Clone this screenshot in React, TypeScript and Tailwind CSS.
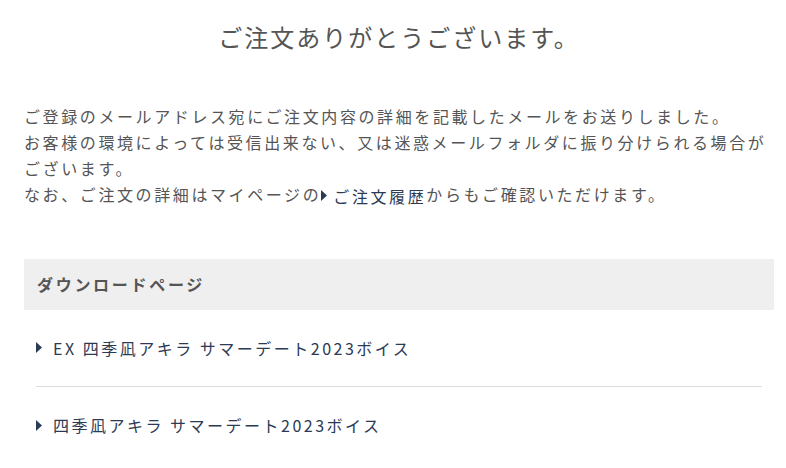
const Arrow = () => (
  <svg width="6" height="11" viewBox="0 0 6 11" className="inline-block shrink-0">
    <path d="M0 0 L6 5.5 L0 11 Z" fill="#2b3a55" />
  </svg>
);

const App = () => {
  const downloads = [
    { id: 1, title: 'EX 四季凪アキラ サマーデート2023ボイス' },
    { id: 2, title: '四季凪アキラ サマーデート2023ボイス' }
  ];
  return <div className="min-h-[468px] bg-white pl-6 pr-3 pt-[19px] text-[#555] font-['Noto_Sans_CJK_JP',sans-serif]">
      {/* Title */}
      <h1 className="text-center text-[24px] leading-[36px] tracking-[2px]">
        ご注文ありがとうございます。
      </h1>
      {/* Message */}
      <div className="mt-[48px] text-[16px] leading-[26px] tracking-[2.6px]">
        <p>ご登録のメールアドレス宛にご注文内容の詳細を記載したメールをお送りしました。</p>
        <p>お客様の環境によっては受信出来ない、又は迷惑メールフォルダに振り分けられる場合がございます。</p>
        <p>
          なお、ご注文の詳細はマイページの
          <span className="inline-flex items-center gap-[6px] text-[#2b3a55]">
            <Arrow />
            ご注文履歴
          </span>
          からもご確認いただけます。
        </p>
      </div>
      {/* Downloads */}
      <div className="mt-[50px]">
        <h2 className="bg-[#efefef] px-[13px] h-[51px] flex items-center text-[16px] font-bold tracking-[2.7px]">
          ダウンロードページ
        </h2>
        <ul className="px-3">
          {downloads.map((d, i) => <li key={d.id} className={`flex items-center gap-[11px] h-[77px] text-[16px] tracking-[2.5px] text-[#2b3a55] ${i === 0 ? 'border-b border-[#dcdcdc]' : ''}`}>
              <Arrow />
              <span>{d.title}</span>
            </li>)}
        </ul>
      </div>
    </div>;
};

export default App;
